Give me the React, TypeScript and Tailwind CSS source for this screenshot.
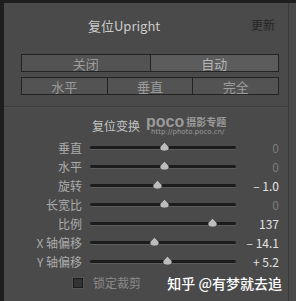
import React from 'react';

const font = { fontFamily: '"Noto Sans CJK SC", "Noto Sans", sans-serif' };

const sliders = [
  { label: '垂直', pos: 0.507, value: '0', active: false },
  { label: '水平', pos: 0.507, value: '0', active: false },
  { label: '旋转', pos: 0.46, value: '– 1.0', active: true },
  { label: '长宽比', pos: 0.507, value: '0', active: false },
  { label: '比例', pos: 0.84, value: '137', active: true },
  { label: 'X 轴偏移', pos: 0.44, value: '– 14.1', active: true },
  { label: 'Y 轴偏移', pos: 0.53, value: '+ 5.2', active: true },
];

const Thumb = () => (
  <svg width="11" height="9" viewBox="0 0 11 9" className="block">
    <path d="M5.5 0 C6.5 2 10 4 10 6 A4.5 3 0 0 1 1 6 C1 4 4.5 2 5.5 0Z" fill="#bcbcbc" stroke="#333" strokeWidth="0.6" />
  </svg>
);

const SliderRow = ({ label, pos, value, active }: typeof sliders[number]) => (
  <div className="flex items-center h-[19px]">
    <div className="w-[78px] text-right text-[12px] leading-none text-[#ababab]">{label}</div>
    <div className="ml-[8px] w-[146px] relative h-[9px] flex items-center">
      <div className="w-full h-[3px] rounded-full bg-[#1c1c1c] shadow-[0_1px_0_#5c5c5c]"></div>
      <div className="absolute top-[-1px]" style={{ left: `calc(${pos * 100}% - 5.5px)` }}>
        <Thumb />
      </div>
    </div>
    <div className={`flex-1 text-right pr-[9px] text-[12px] leading-none ${active ? 'text-[#e2e2e2]' : 'text-[#7c7c7c]'}`}>
      {value}
    </div>
  </div>
);

export default function App() {
  return (
    <div className="w-[296px] h-[301px] bg-[#4a4a4a] border-l-4 border-t-[3px] border-[#1e1e1e] flex overflow-hidden" style={font}>
      <div className="w-[285px] h-full border-r border-[#3a3a3a] flex flex-col">
        {/* header */}
        <div className="flex items-center h-[16px] mt-[14px]">
          <span className="ml-[84px] text-[13px] leading-none text-[#cacaca]">复位Upright</span>
          <span className="ml-auto mr-[13px] text-[12px] leading-none text-[#262626]">更新</span>
        </div>

        {/* upright buttons */}
        <div className="mt-[21px] ml-[17px] w-[258px] flex flex-col gap-[5px]">
          <div className="flex h-[18px] border border-[#232323] bg-[#232323] gap-px">
            <div className="flex-1 bg-[#535353] flex items-center justify-center text-[13px] leading-none text-[#9c9c9c]">关闭</div>
            <div className="flex-1 bg-[#5c5c5c] flex items-center justify-center text-[13px] leading-none text-[#b4b4b4]">自动</div>
          </div>
          <div className="flex h-[18px] border border-[#232323] bg-[#232323] gap-px">
            <div className="flex-1 bg-[#535353] flex items-center justify-center text-[13px] leading-none text-[#9c9c9c]">水平</div>
            <div className="flex-1 bg-[#535353] flex items-center justify-center text-[13px] leading-none text-[#9c9c9c]">垂直</div>
            <div className="flex-1 bg-[#535353] flex items-center justify-center text-[13px] leading-none text-[#9c9c9c]">完全</div>
          </div>
        </div>

        <div className="mt-[11px] h-px bg-[#3c3c3c] shadow-[0_1px_0_#515151]"></div>

        {/* transform header with watermark */}
        <div className="mt-[8px] h-[22px] flex items-start">
          <span className="ml-[88px] mt-[5px] text-[12px] leading-none text-[#c4c4c4]">复位变换</span>
          <div className="ml-[6px] flex flex-col text-[#9a9a9a]">
            <div className="flex items-center gap-[2px] h-[14px]">
              <span className="text-[16px] leading-[14px] font-semibold" style={{ fontFamily: '"Liberation Sans", sans-serif' }}>poco</span>
              <span className="text-[10px] leading-[14px] font-bold">摄影专题</span>
            </div>
            <span className="ml-[5px] text-[7px] leading-[7px]" style={{ fontFamily: '"DejaVu Sans", sans-serif' }}>http://photo.poco.cn/</span>
          </div>
        </div>

        {/* sliders */}
        <div className="mt-[1px] flex flex-col">
          {sliders.map((s, i) => (
            <SliderRow key={i} {...s} />
          ))}
        </div>

        {/* footer */}
        <div className="mt-[4px] flex items-center h-[16px]">
          <div className="ml-[69px] w-[10px] h-[10px] bg-[#333333] border border-[#1a1a1a] shadow-[0_0_0_1px_#555]"></div>
          <span className="ml-[10px] text-[12px] leading-none text-[#8a8a8a]">锁定裁剪</span>
          <span className="ml-auto mr-[6px] text-[14px] leading-none text-white font-medium">知乎 @有梦就去追</span>
        </div>
      </div>
    </div>
  );
}
